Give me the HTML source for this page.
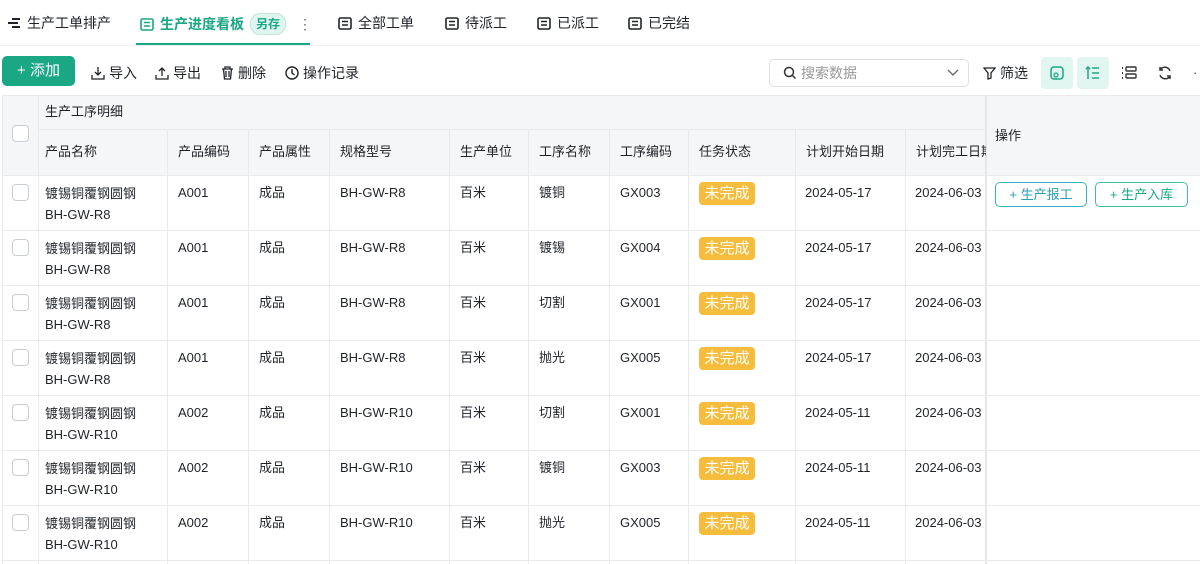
<!DOCTYPE html>
<html><head><meta charset="utf-8"><style>
*{box-sizing:border-box;margin:0;padding:0}
body{width:1200px;height:564px;overflow:hidden;background:#fff;font-family:"Liberation Sans","Noto Sans CJK SC",sans-serif;color:#1f2329;font-size:13px;position:relative}
.a{position:absolute;white-space:nowrap;line-height:20px}
.tab{position:absolute;top:13px;font-size:14px;line-height:20px;color:#1f2329;display:flex;align-items:center;gap:6px}
.tbar{position:absolute;top:63px;font-size:14px;line-height:20px;display:flex;align-items:center;gap:4px;color:#1f2329}
.hd{background:#f5f6f8}
.vl{position:absolute;width:1px;background:#e8eaed}
.hl{position:absolute;height:1px;background:#e8eaed}
.cb{position:absolute;left:12px;width:17px;height:17px;border:1px solid #c9cdd4;border-radius:4px;background:#fff}
.tag{position:absolute;background:#f5bd3b;color:#fff;font-size:15px;width:56px;text-align:center;height:23px;line-height:23px;border-radius:4px}
.btn{position:absolute;height:25px;border:1px solid #2fb5c6;border-radius:5px;color:#2a9fb0;font-size:13px;line-height:23px;text-align:center}
</style></head><body>
<svg width="0" height="0" style="position:absolute"><defs><g id="ti"><rect x="1" y="1" width="12" height="11" rx="1.5" fill="none" stroke="currentColor" stroke-width="1.6"/><path d="M4 4.5h6M4 8h6" stroke="currentColor" stroke-width="1.5"/></g></defs></svg>
<div class="tab" style="left:7px"><svg width="14" height="12"><path d="M5 2h8M1 6h10M5 10h8" stroke="#1f2329" stroke-width="2"/></svg>生产工单排产</div>
<div class="tab" style="left:140px;color:#1aa784;font-weight:bold"><svg width="14" height="13" style="color:#1aa784"><use href="#ti"/></svg>生产进度看板<span style="background:#e0f5ef;border:1px solid #bfe8dc;border-radius:10px;font-size:12px;padding:0 5px;color:#1aa784">另存</span><span style="color:#666;margin-left:6px;font-weight:normal">⋮</span></div>
<div class="a" style="left:136px;top:43px;width:174px;height:2px;background:#1aa784"></div>
<div class="tab" style="left:338px"><svg width="14" height="13"><use href="#ti"/></svg>全部工单</div>
<div class="tab" style="left:445px"><svg width="14" height="13"><use href="#ti"/></svg>待派工</div>
<div class="tab" style="left:537px"><svg width="14" height="13"><use href="#ti"/></svg>已派工</div>
<div class="tab" style="left:628px"><svg width="14" height="13"><use href="#ti"/></svg>已完结</div>
<div class="hl" style="left:0;width:1200px;top:45px;background:#eef0f2"></div>
<div class="a" style="left:2px;top:56px;width:73px;height:30px;background:#1aa784;border-radius:5px;color:#fff;font-size:15px;line-height:30px;text-align:center">+ 添加</div>
<div class="tbar" style="left:91px"><svg width="14" height="14"><path d="M7 1v8M4 6l3 3 3-3M1 9v4h12V9" fill="none" stroke="#1f2329" stroke-width="1.3"/></svg>导入</div>
<div class="tbar" style="left:155px"><svg width="14" height="14"><path d="M7 10V2M4 5l3-3 3 3M1 9v4h12V9" fill="none" stroke="#1f2329" stroke-width="1.3"/></svg>导出</div>
<div class="tbar" style="left:221px"><svg width="13" height="14"><path d="M1 3h11M4 3V1h5v2M2.5 3l1 10h6l1-10M5 5v6M8 5v6" fill="none" stroke="#1f2329" stroke-width="1.3"/></svg>删除</div>
<div class="tbar" style="left:285px"><svg width="14" height="14"><circle cx="7" cy="7" r="6" fill="none" stroke="#1f2329" stroke-width="1.4"/><path d="M7 3v4l2.5 2" fill="none" stroke="#1f2329" stroke-width="1.4"/></svg>操作记录</div>
<div class="a" style="left:769px;top:59px;width:200px;height:28px;border:1px solid #dcdfe4;border-radius:5px"></div>
<svg class="a" style="left:783px;top:66px" width="14" height="14"><circle cx="6" cy="6" r="4.5" fill="none" stroke="#333" stroke-width="1.5"/><path d="M9.5 9.5l3 3" stroke="#333" stroke-width="1.5"/></svg>
<div class="a" style="left:801px;top:63px;font-size:14px;color:#999">搜索数据</div>
<svg class="a" style="left:947px;top:69px" width="12" height="8"><path d="M1 1l5 5 5-5" fill="none" stroke="#666" stroke-width="1.3"/></svg>
<div class="tbar" style="left:983px"><svg width="13" height="13"><path d="M1 1h11l-4 5v5l-3 1V6z" fill="none" stroke="#1f2329" stroke-width="1.3"/></svg>筛选</div>
<div class="a" style="left:1041px;top:57px;width:32px;height:32px;background:#e1f6f0;border-radius:4px"></div>
<svg class="a" style="left:1049px;top:65px" width="16" height="16"><rect x="2" y="2" width="12" height="12" rx="3" fill="none" stroke="#1aa784" stroke-width="1.5"/><circle cx="7" cy="10" r="2" fill="none" stroke="#1aa784" stroke-width="1.3"/></svg>
<div class="a" style="left:1077px;top:57px;width:32px;height:32px;background:#e1f6f0;border-radius:4px"></div>
<svg class="a" style="left:1085px;top:65px" width="16" height="16"><path d="M3 14V2M1 4l2-2 2 2M7 3h7M7 8h7M7 13h7" fill="none" stroke="#1aa784" stroke-width="1.5"/></svg>
<svg class="a" style="left:1121px;top:66px" width="16" height="14"><path d="M1 2h1M1 7h1M1 12h1" stroke="#333" stroke-width="2"/><rect x="5" y="1" width="10" height="4" rx="1" fill="none" stroke="#333" stroke-width="1.4"/><rect x="5" y="8" width="10" height="4" rx="1" fill="none" stroke="#333" stroke-width="1.4"/></svg>
<svg class="a" style="left:1157px;top:65px" width="16" height="16"><path d="M13 6A5.5 5.5 0 0 0 3 5M3 10a5.5 5.5 0 0 0 10 1" fill="none" stroke="#333" stroke-width="1.5"/><path d="M3 2v3h3M13 14v-3h-3" fill="none" stroke="#333" stroke-width="1.5"/></svg>
<div class="a" style="left:1193px;top:63px;color:#333">·</div>
<div class="a hd" style="left:2px;top:95px;width:1198px;height:80px"></div>
<div class="hl" style="left:2px;top:95px;width:1198px"></div>
<div class="hl" style="left:38px;top:129px;width:948px"></div>
<div class="hl" style="left:2px;top:175px;width:1198px"></div>
<div class="cb" style="top:125px"></div>
<div class="a" style="left:45px;top:102px;font-size:13px">生产工序明细</div>
<div class="a" style="left:995px;top:126px;font-size:13px">操作</div>
<div class="vl" style="left:2px;top:95px;height:469px"></div>
<div class="vl" style="left:38px;top:95px;height:469px"></div>
<div class="a" style="left:985px;top:95px;width:2px;height:469px;background:#e4e6e9"></div>
<div id="cols"></div>
<script>
var xs=[38,167,248,329,449,528,609,688,795,905];
var heads=["产品名称","产品编码","产品属性","规格型号","生产单位","工序名称","工序编码","任务状态","计划开始日期","计划完工日期"];
var rows=[["A001","成品","BH-GW-R8","百米","镀铜","GX003","2024-05-17","2024-06-03","R8"],
["A001","成品","BH-GW-R8","百米","镀锡","GX004","2024-05-17","2024-06-03","R8"],
["A001","成品","BH-GW-R8","百米","切割","GX001","2024-05-17","2024-06-03","R8"],
["A001","成品","BH-GW-R8","百米","抛光","GX005","2024-05-17","2024-06-03","R8"],
["A002","成品","BH-GW-R10","百米","切割","GX001","2024-05-11","2024-06-03","R10"],
["A002","成品","BH-GW-R10","百米","镀铜","GX003","2024-05-11","2024-06-03","R10"],
["A002","成品","BH-GW-R10","百米","抛光","GX005","2024-05-11","2024-06-03","R10"]];
var h="";
for(var i=1;i<xs.length;i++)h+='<div class="vl" style="left:'+xs[i]+'px;top:129px;height:435px"></div>';
for(var i=0;i<xs.length;i++)h+='<div class="a" style="left:'+(xs[i]+(i==0?7:11))+'px;top:142px;font-size:13px;'+(i==9?'width:70px;overflow:hidden':'')+'">'+heads[i]+'</div>';
for(var r=0;r<rows.length;r++){var y=175+r*55,d=rows[r];
h+='<div class="hl" style="left:2px;top:'+(y+55)+'px;width:1198px"></div>';
h+='<div class="cb" style="top:'+(y+9)+'px"></div>';
h+='<div class="a" style="left:45px;top:'+(y+8)+'px;line-height:21px">镀锡铜覆钢圆钢<br>BH-GW-'+d[8]+'</div>';
var v=[d[0],d[1],d[2],d[3],d[4],d[5]];
for(var j=0;j<6;j++)h+='<div class="a" style="left:'+(xs[j+1]+11)+'px;top:'+(y+8)+'px">'+v[j]+'</div>';
h+='<div class="tag" style="left:699px;top:'+(y+7)+'px">未完成</div>';
h+='<div class="a" style="left:805px;top:'+(y+8)+'px">'+d[6]+'</div>';
h+='<div class="a" style="left:915px;top:'+(y+8)+'px;width:70px;overflow:hidden">'+d[7]+'</div>';
}
h+='<div class="btn" style="left:995px;top:182px;width:92px">+ 生产报工</div>';
h+='<div class="btn" style="left:1095px;top:182px;width:93px;border-color:#3cc0a0;color:#1aa784">+ 生产入库</div>';
document.getElementById("cols").innerHTML=h;
</script>
</body></html>
